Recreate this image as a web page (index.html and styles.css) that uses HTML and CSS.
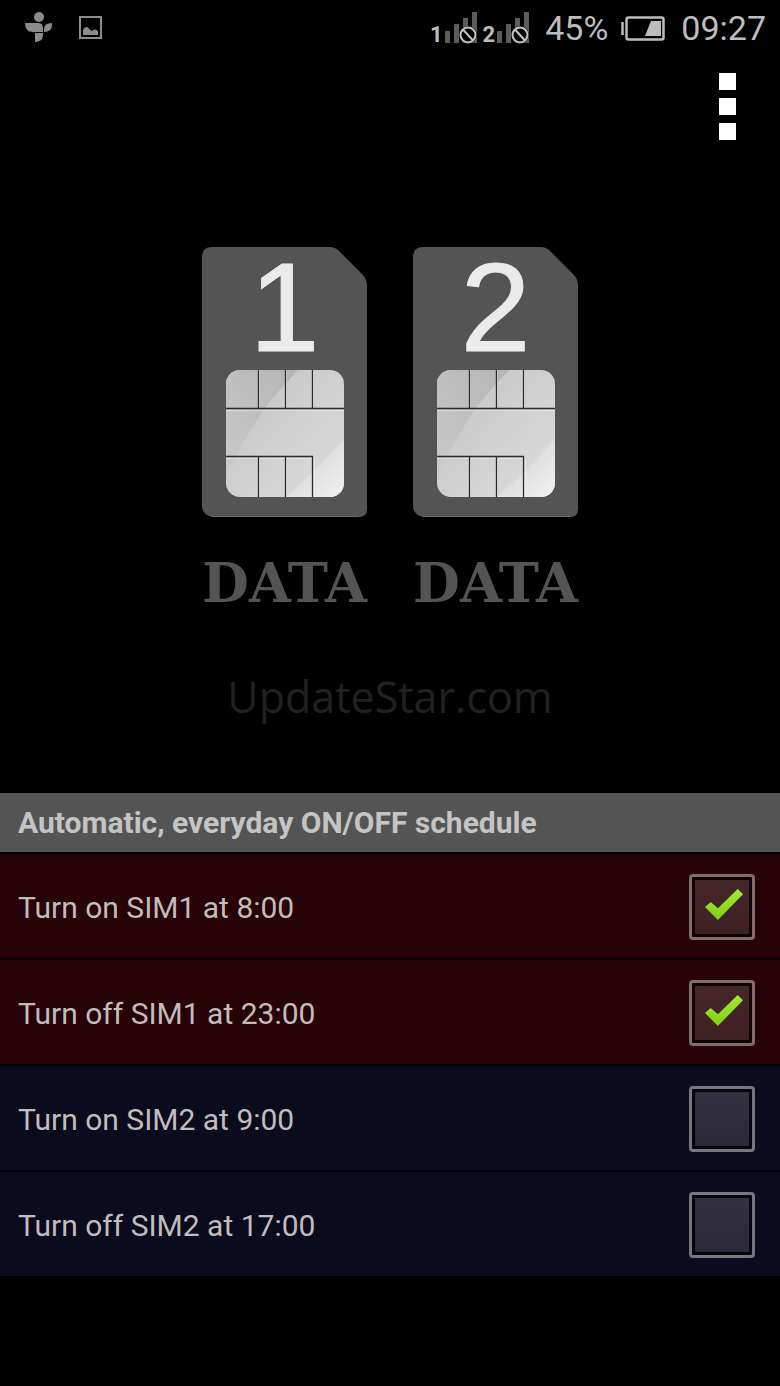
FILE: index.html
```html
<!DOCTYPE html>
<html lang="en">
<head>
  <meta charset="UTF-8">
  <meta name="viewport" content="width=device-width, initial-scale=1">
  <title>Dual SIM schedule</title>
  <link rel="stylesheet" href="styles.css">
</head>
<body>

  <!-- shared drawings -->
  <svg class="defs" width="0" height="0" aria-hidden="true">
    <defs>
      <linearGradient id="chip" x1="0" y1="0" x2="1" y2="1">
        <stop offset="0" stop-color="#c2c2c2"/>
        <stop offset="1" stop-color="#dedede"/>
      </linearGradient>
      <linearGradient id="shade" x1="0" y1="1" x2="1" y2="0">
        <stop offset="0" stop-color="#cacaca"/>
        <stop offset="1" stop-color="#b4b4b4"/>
      </linearGradient>
      <linearGradient id="shine" x1="0" y1="0" x2="1" y2="1">
        <stop offset="0.3" stop-color="#d8d8d8"/>
        <stop offset="1" stop-color="#f2f2f2"/>
      </linearGradient>
      <clipPath id="chipShape">
        <rect x="24" y="123" width="118" height="127" rx="14"/>
      </clipPath>
      <symbol id="sim" viewBox="0 0 165 270">
        <path d="M10 0H128Q133 0 137 4L160 27Q165 32 165 38V262Q165 270 157 270H10Q0 268 0 258V10Q0 0 10 0Z" fill="#545454"/>
        <path d="M10 269.500H157" stroke="#6c6c6c" fill="none"/>
        <g clip-path="url(#chipShape)">
          <rect x="24" y="123" width="118" height="127" fill="url(#chip)"/>
          <path d="M24 123H96Q78 142 62 162Q45 188 24 226Z" fill="url(#shade)"/>
          <path d="M142 192Q116 222 84 250H142Z" fill="url(#shine)"/>
          <path d="M24 163.500H142M24 211.500H110M57.500 123V162M84.500 123V162M111.500 123V162M57.500 212V250M84.500 212V250M112.500 212V250" stroke="#f0f0f0" fill="none" opacity="0.6"/>
          <path d="M24 161.500H142M24 209.500H110.500V250M56.500 123V161M83.500 123V161M110.500 123V161M56.500 210V250M83.500 210V250" stroke="#2c2c2c" stroke-width="1.300" fill="none"/>
        </g>
      </symbol>
      <symbol id="signal" viewBox="0 0 34 34">
        <path d="M2 20h5v12H2zM11 13h5v19h-5zM20 7h5v25h-5zM29 1h5v31h-5z" fill="#5c5c5c"/>
        <circle cx="25" cy="24" r="9" fill="#000"/>
        <circle cx="25" cy="24" r="7.500" fill="#000" stroke="#c4c4c4" stroke-width="2"/>
        <path d="M20 18.500L30 29.500" stroke="#c4c4c4" stroke-width="2"/>
      </symbol>
    </defs>
  </svg>

  <header class="status">
    <svg class="app-icon" width="28" height="32" viewBox="0 0 28 32" fill="#8c8c8c" aria-hidden="true">
      <circle cx="14" cy="5" r="5"/>
      <path d="M0 11H13Q18 11 18 16V20H8Q0 20 0 11ZM19 20V17Q19 11 27 11V13Q27 20 19 20ZM10 21H18V23Q18 30 10 30Z"/>
    </svg>
    <svg class="photo-icon" width="24" height="24" viewBox="0 0 24 24" aria-hidden="true">
      <rect x="1" y="1" width="21" height="21" fill="none" stroke="#8c8c8c" stroke-width="2"/>
      <path d="M4 19V14Q5 11 8 11Q10 12 11 14L13 15Q16 12 19 15V19Z" fill="#8c8c8c"/>
    </svg>
    <div class="signals">
      <span>1</span><svg width="34" height="34"><use href="#signal"/></svg>
      <span>2</span><svg width="34" height="34"><use href="#signal"/></svg>
    </div>
    <span class="percent">45%</span>
    <svg class="battery" width="44" height="25" viewBox="0 0 44 25" aria-hidden="true">
      <path d="M1.500 6V19" stroke="#bdbdbd" stroke-width="2.500"/>
      <rect x="5.500" y="1.500" width="37" height="22" rx="2" fill="none" stroke="#bdbdbd" stroke-width="2.500"/>
      <path d="M30 5H40V20H24Z" fill="#bdbdbd"/>
    </svg>
    <time>09:27</time>
  </header>

  <div class="toolbar">
    <button class="menu" aria-label="Menu"><i></i><i></i><i></i></button>
  </div>

  <main>
    <section class="sims">
      <div class="sim">
        <button class="card"><svg viewBox="0 0 165 270" aria-hidden="true"><use href="#sim"/></svg><span>1</span></button>
        <button class="data">DATA</button>
      </div>
      <div class="sim">
        <button class="card"><svg viewBox="0 0 165 270" aria-hidden="true"><use href="#sim"/></svg><span>2</span></button>
        <button class="data">DATA</button>
      </div>
    </section>

    <p class="watermark">UpdateStar.com</p>

    <section class="schedule">
      <h2>Automatic, everyday ON/OFF schedule</h2>
      <label class="row red">Turn on SIM1 at 8:00 <input type="checkbox" checked></label>
      <label class="row red">Turn off SIM1 at 23:00 <input type="checkbox" checked></label>
      <label class="row blue">Turn on SIM2 at 9:00 <input type="checkbox"></label>
      <label class="row blue">Turn off SIM2 at 17:00 <input type="checkbox"></label>
    </section>
  </main>

</body>
</html>
```

FILE: styles.css
```css
* {
  box-sizing: border-box;
}

body {
  margin: 0;
  min-height: 100vh;
  background: #000;
  color: #c2bcbc;
  font-family: Roboto, "Liberation Sans", sans-serif;
}

button {
  border: none;
  padding: 0;
  background: none;
  cursor: pointer;
}

.defs {
  position: absolute;
}

.status {
  display: flex;
  align-items: center;
  height: 56px;
  padding: 0 14px 0 25px;
  color: #bdbdbd;
  font-size: 34px;
}

.photo-icon {
  margin-left: 26px;
}

.signals {
  display: flex;
  align-items: flex-end;
  margin-left: auto;
  font-size: 22px;
  font-weight: bold;
  line-height: 20px;
}

.signals svg {
  margin-right: 6px;
}

.percent {
  margin-left: 10px;
}

.battery {
  margin: 0 16px 0 13px;
}

.toolbar {
  display: flex;
  justify-content: flex-end;
  padding: 17px 44px 0 0;
}

.menu {
  display: grid;
  gap: 8px;
}

.menu i {
  width: 17px;
  height: 17px;
  background: #fff;
}

.sims {
  display: flex;
  justify-content: center;
  gap: 46px;
  margin-top: 107px;
}

.sim {
  width: 165px;
}

.card {
  display: grid;
  width: 100%;
}

.card svg,
.card span {
  grid-area: 1 / 1;
  width: 100%;
}

.card span {
  color: #ebebeb;
  font-family: "Liberation Sans", Arial, sans-serif;
  font-size: 126px;
  line-height: 122px;
  -webkit-text-stroke: 1px #ebebeb;
}

.data {
  display: block;
  width: 100%;
  margin-top: 28px;
  color: #545454;
  font-family: "DejaVu Serif", serif;
  font-size: 54px;
  font-weight: bold;
  line-height: 76px;
}

.watermark {
  margin: 46px 0 0;
  color: #212121;
  font-family: "Open Sans", sans-serif;
  font-size: 43px;
  line-height: 60px;
  text-align: center;
}

.schedule {
  margin-top: 66px;
}

.schedule h2 {
  margin: 0;
  padding: 1px 18px 0;
  background: #545454;
  color: #c4c4c4;
  font-size: 30px;
  line-height: 58px;
}

.row {
  display: flex;
  align-items: center;
  justify-content: space-between;
  height: 106px;
  padding: 2px 25px 0 18px;
  border-top: 2px solid #000;
  font-size: 30px;
}

.red {
  background: #270206;
}

.blue {
  background: #0a0b1d;
}

.row input {
  appearance: none;
  width: 66px;
  height: 66px;
  margin: 0;
  border: 3px solid #76767f;
  border-radius: 4px;
  background: linear-gradient(#33313f, #2b2937);
  box-shadow: inset 0 0 0 3px #05040c;
}

.red input {
  border-color: #856b6c;
  background: linear-gradient(#452629, #3e2023);
  box-shadow: inset 0 0 0 3px #0c0002;
}

.row input:checked::before {
  content: "";
  display: block;
  width: 38px;
  height: 31px;
  margin: 12px 0 0 13px;
  background: linear-gradient(#a4e83c, #7fd110);
  clip-path: polygon(0 58%, 15% 42%, 34% 62%, 86% 0, 100% 17%, 34% 100%);
}
```
